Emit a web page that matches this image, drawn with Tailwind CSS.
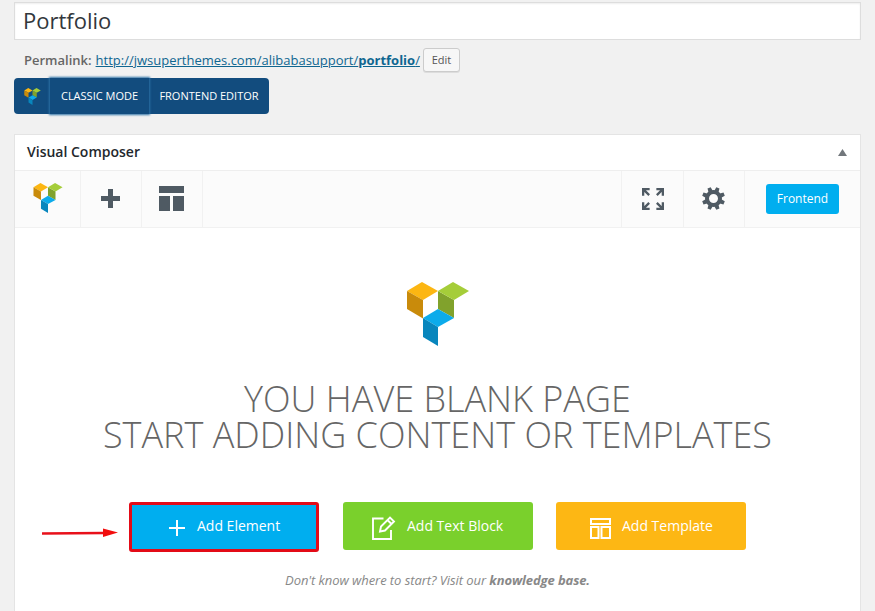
<!DOCTYPE html>
<html lang="en">
<head>
<meta charset="utf-8">
<title>Portfolio</title>
<script src="https://cdn.jsdelivr.net/npm/@tailwindcss/browser@4"></script>
</head>
<body class="w-[875px] h-[611px] overflow-hidden bg-[#f1f1f1] font-['Open_Sans',sans-serif] text-[13px] text-[#444]">
<svg class="hidden">
  <symbol id="logo" viewBox="0 0 62 64">
    <path fill="#fcb612" d="M0 9 15 0l16 9-15 9z"/><path fill="#c98b0b" d="M0 9l16 9v18.500L0 27z"/>
    <path fill="#81a22c" d="M31 27V9l16 9v18z"/><path fill="#a5cd39" d="M31 9 46 0l16 9-15 9z"/>
    <path fill="#0cabeb" d="M16 36l15-9 16 9-16 9z"/><path fill="#0886bd" d="M16 36l15 9v19L16 55z"/>
  </symbol>
</svg>
<main class="flex h-[611px] w-[861px] flex-col pl-[14px] pt-[2px]">
  <div class="flex h-[38px] shrink-0 items-center border border-[#ddd] bg-white pb-px pl-2 text-[22px] text-[#32373c] shadow-[inset_0_1px_2px_rgba(0,0,0,0.07)]"><span>Portfolio</span></div>
  <div class="flex h-[38px] shrink-0 items-center pl-[10px] pt-[2px]">
    <strong class="mr-1 mt-[2px] font-semibold text-[#666]">Permalink:</strong>
    <a class="mt-[2px] whitespace-nowrap text-[#0f6690] underline">http://jwsuperthemes.com/alibabasupport/<b>portfolio</b>/</a>
    <button class="ml-[3px] h-6 w-[37px] rounded-[3px] border border-[#ccc] bg-[#f7f7f7] text-[11px] text-[#555] shadow-[0_1px_0_#ddd]">Edit</button>
  </div>
  <div class="flex h-9 w-[255px] shrink-0 items-stretch rounded-[4px] bg-[#124c7e] text-[11px] text-white">
    <div class="flex w-9 items-center justify-center"><svg class="h-[17px] w-[17px]"><use href="#logo"/></svg></div>
    <div class="flex w-[99px] items-center justify-center whitespace-nowrap shadow-[0_0_2px_1px_#2b70a5]">CLASSIC MODE</div>
    <div class="flex flex-1 items-center justify-center whitespace-nowrap">FRONTEND EDITOR</div>
  </div>
  <section class="mt-5 flex min-h-0 flex-1 flex-col border border-b-0 border-[#e4e4e4] bg-white">
    <header class="flex h-9 shrink-0 items-center justify-between border-b border-[#eee] pl-3 pr-[13px]">
      <h2 class="pb-[2px] text-[14px] font-semibold text-[#23282d]">Visual Composer</h2>
      <svg class="mb-px h-[7px] w-[9px]" viewBox="0 0 9 7"><path fill="#72777c" d="M4.500 0 9 7H0z"/></svg>
    </header>
    <div class="flex h-[57px] shrink-0 border-b border-[#f1f1f1] bg-[#fbfbfb] text-[#4f5a63]">
      <div class="flex w-[66px] items-center border-r border-[#f1f1f1] pb-[2px] pl-[18px]"><svg class="h-[30px] w-[30px]"><use href="#logo"/></svg></div>
      <div class="flex w-[61px] items-center justify-center border-r border-[#f1f1f1] pb-[2px] pr-[2px]"><svg class="h-[19px] w-[19px]" viewBox="0 0 19 19"><path fill="currentColor" d="M7 0h5v7h7v5h-7v7H7v-7H0V7h7z"/></svg></div>
      <div class="flex w-[61px] items-center justify-center border-r border-[#f1f1f1] pb-[2px] pr-[2px]"><svg class="h-[25px] w-[25px]" viewBox="0 0 25 25"><path fill="currentColor" d="M0 0h25v7H0zM0 10h11v15H0zM14 10h11v15H14z"/></svg></div>
      <div class="flex-1"></div>
      <div class="flex w-[63px] items-center justify-center border-x border-[#f1f1f1] pl-px">
        <svg class="h-[22px] w-[22px]" viewBox="0 0 23 23" fill="none" stroke="currentColor" stroke-width="2.400"><path id="arr" d="M1.200 8V1.200H8M1.200 1.200l6.300 6.300"/><use href="#arr" transform="translate(23) scale(-1 1)"/><use href="#arr" transform="translate(0 23) scale(1 -1)"/><use href="#arr" transform="translate(23 23) scale(-1 -1)"/></svg>
      </div>
      <div class="flex w-[61px] items-center justify-center border-r border-[#f1f1f1] pb-[2px] pr-[2px]">
        <svg class="h-[23px] w-[23px]" viewBox="-11.500 -11.500 23 23" fill="currentColor"><path fill-rule="evenodd" d="M0-8.500A8.500 8.500 0 1 1 0 8.500 8.500 8.500 0 1 1 0-8.500zM0-4.500A4.500 4.500 0 1 0 0 4.500 4.500 4.500 0 1 0 0-4.500z"/><g id="teeth"><path id="tooth" d="M-2.300-7-1.700-11.500h3.400L2.300-7z" transform="rotate(22.500)"/><use href="#tooth" transform="rotate(45)"/><use href="#tooth" transform="rotate(90)"/><use href="#tooth" transform="rotate(135)"/></g><use href="#teeth" transform="rotate(180)"/></svg>
      </div>
      <div class="flex w-[115px] items-center justify-center"><button class="h-[30px] w-[73px] rounded-[3px] bg-[#00aeef] text-[12px] text-white">Frontend</button></div>
    </div>
    <div class="relative flex flex-1 flex-col items-center pt-[54px]">
      <svg class="h-16 w-[62px]"><use href="#logo"/></svg>
      <h1 class="mt-[35px] whitespace-nowrap text-center text-[36px] font-light leading-9 text-[#666]">YOU HAVE BLANK PAGE<br>START ADDING CONTENT OR TEMPLATES</h1>
      <div class="mt-[49px] flex gap-6 text-[14px] text-white">
        <button class="flex h-[50px] w-[190px] items-center rounded-[3px] border-[3px] border-[#e30b17] bg-[#00aeef] pl-[37px]"><svg class="mr-3 mt-[2px] h-4 w-4" viewBox="0 0 16 16"><path stroke="currentColor" stroke-width="2" d="M8 0v16M0 8h16"/></svg><span class="whitespace-nowrap pb-1">Add Element</span></button>
        <button class="flex h-12 w-[190px] items-center rounded-[3px] bg-[#7ad02c] pl-[29px]"><svg class="mr-[11px] mt-1 h-6 w-6" viewBox="0 0 24 24" fill="none" stroke="currentColor" stroke-width="1.900"><path d="M11.500 2.500H1V23h18V14M8 15.500l1-5L18 1.500l4 4-9 9zM15.500 4l4 4"/></svg><span class="whitespace-nowrap pb-[2px]">Add Text Block</span></button>
        <button class="-ml-px flex h-12 w-[190px] items-center rounded-[3px] bg-[#fdb714] pl-[34px]"><svg class="mr-[11px] mt-[5px] h-[21px] w-[21px]" viewBox="0 0 21 21" fill="none" stroke="currentColor" stroke-width="2"><path d="M1 1h19v5H1zM1 9h7.500v11H1zM11.500 9H20v11h-8.500z"/></svg><span class="whitespace-nowrap pb-[2px]">Add Template</span></button>
      </div>
      <p class="mt-[19px] whitespace-nowrap text-[13px] italic tracking-[-0.07px] text-[#888]">Don't know where to start? Visit our <b class="font-bold tracking-[-0.1px]">knowledge base.</b></p>
      <svg class="absolute left-[27px] top-[299px] h-[12px] w-[77px]" viewBox="0 0 77 12"><path stroke="#e8101a" stroke-width="2.500" d="M0 6.500 62 6"/><path fill="#f20d0d" d="M61 1.500 76 5.500 61 10z"/></svg>
    </div>
  </section>
</main>
</body>
</html>
